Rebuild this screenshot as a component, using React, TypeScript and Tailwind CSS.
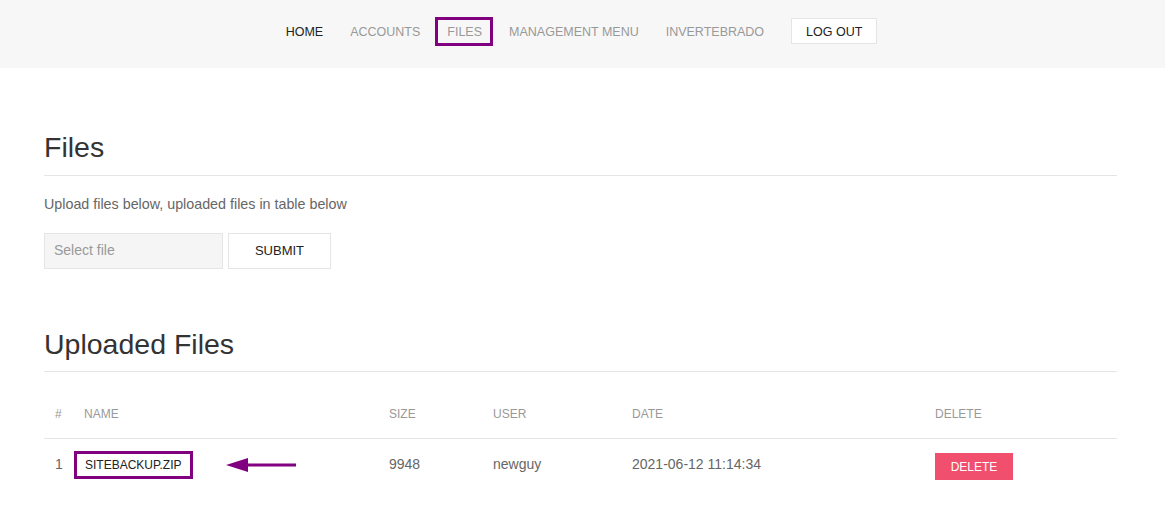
import React from "react";

const font = { fontFamily: '"Liberation Sans", Arial, sans-serif' };

export default function App() {
  return (
    <div className="w-[1165px] h-[505px] bg-white overflow-hidden" style={font}>
      <header className="h-[68px] bg-[#f7f7f7] flex items-start justify-center pt-[18px] pr-[2px]">
        <nav className="flex items-center gap-[27px] text-[12.5px] leading-none h-[26px]">
          <span className="text-[#222] pt-[2px]">HOME</span>
          <span className="text-[#999] pt-[2px]">ACCOUNTS</span>
          <span className="relative text-[#999] pt-[2px]">
            FILES
            <span className="absolute left-[-12px] right-[-11px] top-[-7px] bottom-[-8px] border-[3px] border-[#800080]" />
          </span>
          <span className="text-[#999] pt-[2px]">MANAGEMENT MENU</span>
          <span className="text-[#999] pt-[2px]">INVERTEBRADO</span>
          <span className="h-[26px] px-[14px] pt-[2px] flex items-center bg-white border border-[#e5e5e5] text-[#222]">LOG OUT</span>
        </nav>
      </header>
      <main className="pl-[44px] pr-[48px] pt-[65px]">
        <h1 className="text-[28.5px] leading-none text-[#333] pb-[13px] border-b border-[#e5e5e5]">Files</h1>
        <p className="mt-[18px] text-[14.3px] text-[#666]">Upload files below, uploaded files in table below</p>
        <div className="mt-[18px] flex gap-[5px]">
          <div className="w-[179px] h-[36px] bg-[#f5f5f5] border border-[#e5e5e5] flex items-center px-[9px] text-[14px] text-[#999]">Select file</div>
          <div className="w-[103px] h-[36px] bg-white border border-[#e5e5e5] flex items-center justify-center text-[13px] text-[#222]">SUBMIT</div>
        </div>
        <h2 className="mt-[61px] text-[28.5px] leading-none text-[#333] pb-[13px] border-b border-[#e5e5e5]">Uploaded Files</h2>
        <div className="mt-[22px] w-full">
          <div className="flex h-[45px] items-center pb-[4px] text-[12px] text-[#999] border-b border-[#e5e5e5]">
            <div className="w-[40px] pl-[11px]">#</div>
            <div className="w-[305px]">NAME</div>
            <div className="w-[104px]">SIZE</div>
            <div className="w-[139px]">USER</div>
            <div className="w-[303px]">DATE</div>
            <div>DELETE</div>
          </div>
          <div className="flex h-[51px] items-center text-[14px] text-[#666]">
            <div className="w-[30px] pl-[11px]">1</div>
            <div className="w-[315px] flex items-center">
              <span className="border-[3px] border-[#800080] h-[28px] w-[119px] px-[8px] flex items-center text-[12px] text-[#222]">SITEBACKUP.ZIP</span>
              <svg width="72" height="16" viewBox="0 0 72 16" className="ml-[33px]">
                <line x1="18" y1="8" x2="70" y2="8" stroke="#800080" strokeWidth="3" />
                <polygon points="0,8 22,1 22,15" fill="#800080" />
              </svg>
            </div>
            <div className="w-[104px]">9948</div>
            <div className="w-[139px]">newguy</div>
            <div className="w-[303px]">2021-06-12 11:14:34</div>
            <div className="pt-[4px]">
              <span className="h-[27px] w-[78px] bg-[#f0506e] text-white text-[12px] flex items-center justify-center">DELETE</span>
            </div>
          </div>
        </div>
      </main>
    </div>
  );
}
